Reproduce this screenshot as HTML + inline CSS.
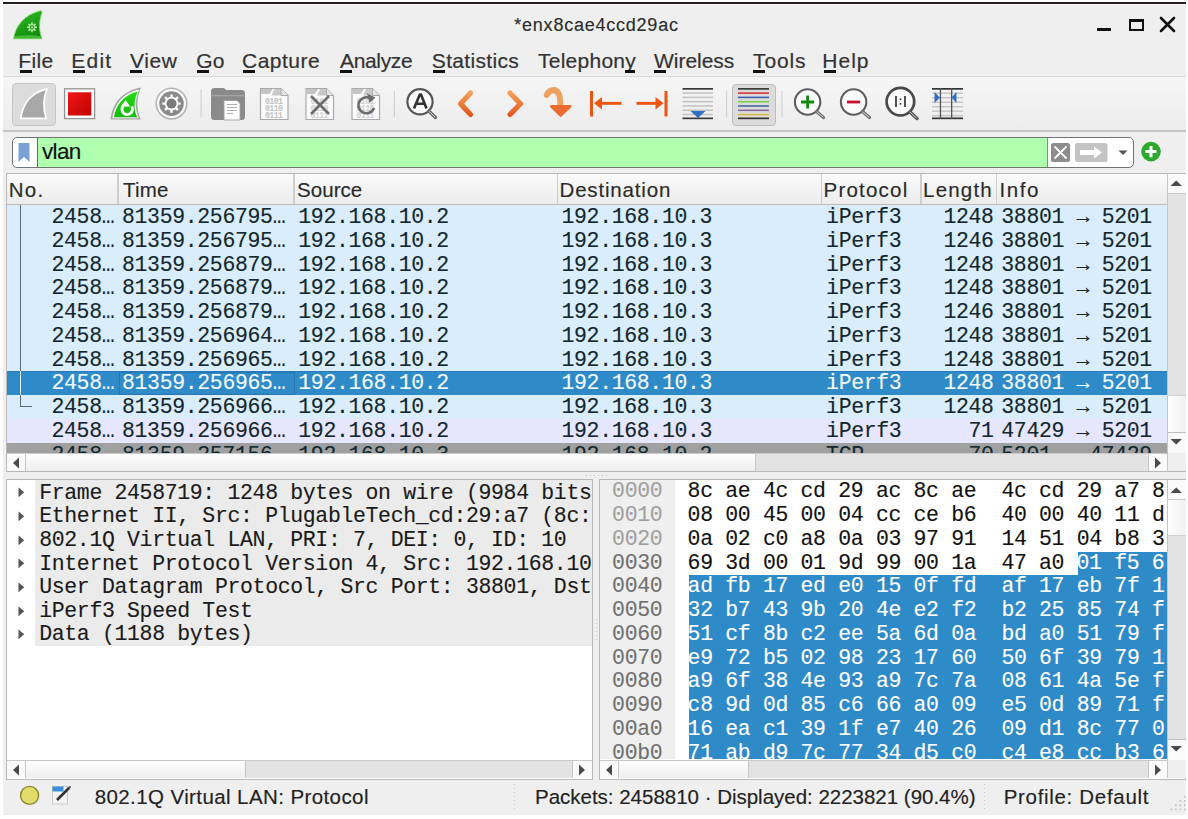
<!DOCTYPE html><html><head><meta charset="utf-8"><style>
*{box-sizing:border-box}
html,body{margin:0;padding:0}
body{width:1188px;height:819px;background:#fff;position:relative;overflow:hidden;font-family:"Liberation Sans",sans-serif;}
.a{position:absolute}
.ui{font-family:"Liberation Sans",sans-serif;color:#333;white-space:pre}
.m{font-family:"Liberation Mono",monospace;font-size:21.5px;letter-spacing:-0.35px;-webkit-text-stroke:0.12px currentColor;white-space:pre;line-height:23.75px}
.menu{font-size:21px;line-height:24px;color:#333;-webkit-text-stroke:0.2px #333}
.menu u{text-decoration:none;border-bottom:3px solid #111;}
</style></head><body>
<div class="a" style="left:3px;top:2px;width:1183px;height:813px;background:#efefef"></div>
<div class="a" style="left:3px;top:2px;width:1183px;height:1.5px;background:#2a1e26"></div>
<div class="a" style="left:3px;top:3.6px;width:1183px;height:1.4px;background:#fafafa"></div>
<svg class="a" style="left:12px;top:9px" width="34" height="32" viewBox="0 0 34 32">
<defs><linearGradient id="gfin" x1="0" y1="0" x2="0.5" y2="1"><stop offset="0" stop-color="#36c024"/><stop offset="1" stop-color="#108c10"/></linearGradient></defs>
<path d="M1.5 29.8 C3.5 17 12 6 28 1.8 Q30.5 1.3 30 3.5 C27 12 26.5 21 30 29.8 Z" fill="url(#gfin)" stroke="#86dc74" stroke-width="0.8"/>
<path d="M2.2 27.3 C12 25.8 22 25.8 29.3 27.3 L30 29.8 L1.6 29.8 Z" fill="#62d24c" opacity="0.6"/>
<path d="M19.27 14.98 L19.19 13.37 L20.81 13.37 L20.73 14.98 L21.83 15.44 L22.92 14.24 L24.06 15.38 L22.86 16.47 L23.32 17.57 L24.93 17.49 L24.93 19.11 L23.32 19.03 L22.86 20.13 L24.06 21.22 L22.92 22.36 L21.83 21.16 L20.73 21.62 L20.81 23.23 L19.19 23.23 L19.27 21.62 L18.17 21.16 L17.08 22.36 L15.94 21.22 L17.14 20.13 L16.68 19.03 L15.07 19.11 L15.07 17.49 L16.68 17.57 L17.14 16.47 L15.94 15.38 L17.08 14.24 L18.17 15.44 Z" fill="#b8ecaa"/>
<circle cx="20" cy="18.3" r="2.2" fill="#2a9a22"/>
<circle cx="20" cy="18.3" r="1.0" fill="#c8f0bc"/>
</svg>
<div class="a ui" style="left:514.3px;top:12.6px;font-size:18px;line-height:24px;letter-spacing:0.767px;-webkit-text-stroke:0.15px #2b2b2b;color:#2b2b2b">*enx8cae4ccd29ac</div>
<div class="a" style="left:1097px;top:28.2px;width:14px;height:3px;background:#111"></div>
<div class="a" style="left:1129px;top:19px;width:15px;height:12px;border:2px solid #111;border-top-width:3px"></div>
<svg class="a" style="left:1159px;top:16px" width="17" height="17" viewBox="0 0 17 17"><path d="M2 2 L15 15 M15 2 L2 15" stroke="#111" stroke-width="2.6" stroke-linecap="round"/></svg>
<div class="a ui menu" style="left:18.2px;top:49px;letter-spacing:0.367px">File</div>
<div class="a ui menu" style="left:71.2px;top:49px;letter-spacing:1.267px">Edit</div>
<div class="a ui menu" style="left:130px;top:49px;letter-spacing:0.6px">View</div>
<div class="a ui menu" style="left:196.3px;top:49px;letter-spacing:0.2px">Go</div>
<div class="a ui menu" style="left:242px;top:49px;letter-spacing:0.5px">Capture</div>
<div class="a ui menu" style="left:340px;top:49px;letter-spacing:-0.333px">Analyze</div>
<div class="a ui menu" style="left:431.8px;top:49px;letter-spacing:0.333px">Statistics</div>
<div class="a ui menu" style="left:538px;top:49px;letter-spacing:0.25px">Telephony</div>
<div class="a ui menu" style="left:654px;top:49px;letter-spacing:-0.029px">Wireless</div>
<div class="a ui menu" style="left:753px;top:49px;letter-spacing:0.9px">Tools</div>
<div class="a ui menu" style="left:822.3px;top:49px;letter-spacing:1.0px">Help</div>
<div class="a" style="left:20.2px;top:70px;width:12px;height:3.2px;background:#111"></div>
<div class="a" style="left:73.2px;top:70px;width:12px;height:3.2px;background:#111"></div>
<div class="a" style="left:130px;top:70px;width:12px;height:3.2px;background:#111"></div>
<div class="a" style="left:197.3px;top:70px;width:12px;height:3.2px;background:#111"></div>
<div class="a" style="left:243px;top:70px;width:12px;height:3.2px;background:#111"></div>
<div class="a" style="left:340px;top:70px;width:12px;height:3.2px;background:#111"></div>
<div class="a" style="left:432.8px;top:70px;width:12px;height:3.2px;background:#111"></div>
<div class="a" style="left:624.5px;top:70px;width:10.5px;height:3.2px;background:#111"></div>
<div class="a" style="left:654px;top:70px;width:12px;height:3.2px;background:#111"></div>
<div class="a" style="left:753px;top:70px;width:12px;height:3.2px;background:#111"></div>
<div class="a" style="left:824.3px;top:70px;width:12px;height:3.2px;background:#111"></div>
<div class="a" style="left:3px;top:76px;width:1183px;height:1px;background:#dadada"></div>
<div class="a" style="left:3px;top:77px;width:1183px;height:53px;background:linear-gradient(#f6f6f6,#ececec)"></div>
<div class="a" style="left:3px;top:130px;width:1183px;height:1.5px;background:#c4c4c4"></div>
<div class="a" style="left:11.5px;top:83px;width:44px;height:43px;border-radius:4px;background:#dcdcdc;border:1px solid #c6c6c6"></div>
<div class="a" style="left:731.5px;top:83.5px;width:44px;height:42px;border-radius:4px;background:#dcdcdc;border:1px solid #bdbdbd"></div>

<svg class="a" style="left:0;top:0" width="1188" height="140" viewBox="0 0 1188 140">
<defs>
<linearGradient id="gred" x1="0" y1="0" x2="1" y2="1"><stop offset="0" stop-color="#f01818"/><stop offset="1" stop-color="#c00000"/></linearGradient>
<linearGradient id="ggrn" x1="0" y1="0" x2="0" y2="1"><stop offset="0" stop-color="#22dd10"/><stop offset="1" stop-color="#18b810"/></linearGradient>
<linearGradient id="gorg" x1="0" y1="0" x2="0" y2="1"><stop offset="0" stop-color="#f2a05a"/><stop offset="1" stop-color="#e35a1e"/></linearGradient>
</defs>
<!-- shark fin gray -->
<path d="M20.8 118.3 C22.5 104 31 92.5 47 88.8 C43.5 97.5 42.8 108 46.2 118.3 Z" fill="#a8a8a8" stroke="#fff" stroke-width="1.7"/>
<!-- stop -->
<rect x="64.6" y="88.8" width="30" height="29.8" fill="#fdfdfd" stroke="#929292" stroke-width="1.3"/>
<rect x="68" y="92.3" width="23.3" height="23.2" fill="url(#gred)"/>
<!-- restart fin -->
<path d="M110.6 119.5 C112.5 104 121 91.5 141 87.6 C136.5 98 136 110 140.8 119.5 Z" fill="#a6a6a6"/>
<path d="M112.4 118.3 C114.5 104.5 122.5 93.3 139.2 89.6 C135 99 134.6 109.5 138.8 118.3 Z" fill="#f4fff0"/>
<path d="M113.9 117.2 C116 105 123.5 94.8 137.8 91.4 C133.8 100 133.4 109.5 137.2 117.2 Z" fill="url(#ggrn)"/>
<path d="M123.2 106 A5.2 5.2 0 1 0 131.6 106.5" fill="none" stroke="#fff" stroke-width="3"/>
<path d="M120.6 106.8 L125.6 100 L130 106.4 Z" fill="#fff"/>
<!-- gear options -->
<circle cx="171.5" cy="103.6" r="15.3" fill="#fafafa" stroke="#b4b4b4" stroke-width="1.6"/>
<circle cx="171.5" cy="103.6" r="12.3" fill="#8a8a8a"/>
<path d="M170.29 96.81 L170.28 94.48 L172.72 94.48 L172.71 96.81 L175.45 97.94 L177.09 96.29 L178.81 98.01 L177.16 99.65 L178.29 102.39 L180.62 102.38 L180.62 104.82 L178.29 104.81 L177.16 107.55 L178.81 109.19 L177.09 110.91 L175.45 109.26 L172.71 110.39 L172.72 112.72 L170.28 112.72 L170.29 110.39 L167.55 109.26 L165.91 110.91 L164.19 109.19 L165.84 107.55 L164.71 104.81 L162.38 104.82 L162.38 102.38 L164.71 102.39 L165.84 99.65 L164.19 98.01 L165.91 96.29 L167.55 97.94 Z" fill="#ffffff"/>
<circle cx="171.5" cy="103.6" r="5" fill="#7c7c7c"/>
<!-- separator -->
<rect x="200.5" y="89" width="1.2" height="28" fill="#d2d2d2"/>
<!-- folder -->
<path d="M211 91.5 Q211 88 214.5 88 L223 88 Q225 88 226 90 L241.5 90 Q245 90 245 93.5 L245 116.5 Q245 120 241.5 120 L214.5 120 Q211 120 211 116.5 Z" fill="#8a8a8a"/>
<rect x="211.5" y="95" width="33" height="1.3" fill="#a5a5a5"/>
<path d="M224 100.5 L237 100.5 L240 103.5 L240 120 L224 120 Z" fill="#fdfdfd" stroke="#a0a0a0" stroke-width="0.9"/>
<path d="M227 104.5 h10 M227 107.5 h10 M227 110.5 h10 M227 113.5 h6" stroke="#b0b0b0" stroke-width="1.1"/>
<path d="M260.5 88.5 L281.0 88.5 L288.0 95.5 L288.0 119.5 L260.5 119.5 Z" fill="#fbfbfb" stroke="#a9a9a9" stroke-width="1.2"/>
<path d="M261.1 89.1 L272.5 89.1 L269.5 94.0 L261.1 94.0 Z" fill="#c4c4c4"/>
<path d="M274.5 89.1 L281.0 89.1 L287.4 95.5 L271.5 95.5 Z" fill="#c9c9c9"/>
<path d="M281.0 88.5 L281.0 95.5 L288.0 95.5" fill="#e6e6e6" stroke="#a9a9a9" stroke-width="1"/>
<text x="265" y="103.5" font-family="Liberation Mono" font-weight="bold" font-size="8.2" fill="#c2c2c2" letter-spacing="-0.6">0101</text><text x="265" y="110.7" font-family="Liberation Mono" font-weight="bold" font-size="8.2" fill="#c2c2c2" letter-spacing="-0.6">0110</text><text x="265" y="117.9" font-family="Liberation Mono" font-weight="bold" font-size="8.2" fill="#c2c2c2" letter-spacing="-0.6">0111</text>
<path d="M306 88.5 L326.5 88.5 L333.5 95.5 L333.5 119.5 L306 119.5 Z" fill="#fbfbfb" stroke="#a9a9a9" stroke-width="1.2"/>
<path d="M306.6 89.1 L318 89.1 L315 94.0 L306.6 94.0 Z" fill="#c4c4c4"/>
<path d="M320 89.1 L326.5 89.1 L332.9 95.5 L317 95.5 Z" fill="#c9c9c9"/>
<path d="M326.5 88.5 L326.5 95.5 L333.5 95.5" fill="#e6e6e6" stroke="#a9a9a9" stroke-width="1"/>
<text x="310.5" y="103.5" font-family="Liberation Mono" font-weight="bold" font-size="8.2" fill="#cfcfcf" letter-spacing="-0.6">0101</text><text x="310.5" y="110.7" font-family="Liberation Mono" font-weight="bold" font-size="8.2" fill="#cfcfcf" letter-spacing="-0.6">0110</text><text x="310.5" y="117.9" font-family="Liberation Mono" font-weight="bold" font-size="8.2" fill="#cfcfcf" letter-spacing="-0.6">0111</text>
<path d="M311 96 L329 114 M329 96 L311 114" stroke="#6c6c6c" stroke-width="2.6"/>
<path d="M352 88.5 L372.5 88.5 L379.5 95.5 L379.5 119.5 L352 119.5 Z" fill="#fbfbfb" stroke="#a9a9a9" stroke-width="1.2"/>
<path d="M352.6 89.1 L364 89.1 L361 94.0 L352.6 94.0 Z" fill="#c4c4c4"/>
<path d="M366 89.1 L372.5 89.1 L378.9 95.5 L363 95.5 Z" fill="#c9c9c9"/>
<path d="M372.5 88.5 L372.5 95.5 L379.5 95.5" fill="#e6e6e6" stroke="#a9a9a9" stroke-width="1"/>
<text x="356.5" y="103.5" font-family="Liberation Mono" font-weight="bold" font-size="8.2" fill="#cfcfcf" letter-spacing="-0.6">0101</text><text x="356.5" y="110.7" font-family="Liberation Mono" font-weight="bold" font-size="8.2" fill="#cfcfcf" letter-spacing="-0.6">0110</text><text x="356.5" y="117.9" font-family="Liberation Mono" font-weight="bold" font-size="8.2" fill="#cfcfcf" letter-spacing="-0.6">0111</text>
<path d="M372.5 100 A8 8 0 1 0 374 108" fill="none" stroke="#6c6c6c" stroke-width="2.6"/>
<path d="M367 93.5 L375.5 97.5 L369.5 103 Z" fill="#6c6c6c"/>
<!-- separator -->
<rect x="393.8" y="91" width="1.2" height="26" fill="#d2d2d2"/>
<!-- find A -->
<circle cx="420" cy="101.8" r="12.6" fill="#fbfbfb" stroke="#555" stroke-width="2.2"/>
<path d="M428.8 111 L435.5 117.5" stroke="#666" stroke-width="3.2" stroke-linecap="round"/>
<path d="M429.5 111.7 L435 117" stroke="#ddd" stroke-width="1" stroke-linecap="round"/>
<path d="M414 108.5 L419.8 94.5 L421 94.5 L426.5 108.5 M416.3 103.8 H424.3" fill="none" stroke="#333" stroke-width="2.6" stroke-linejoin="round"/>
<!-- chevrons -->
<path d="M470.5 93 L460.5 103.7 L470.5 114.5" fill="none" stroke="url(#gorg)" stroke-width="5.2" stroke-linecap="round" stroke-linejoin="round"/>
<path d="M510 93 L520.5 103.7 L510 114.5" fill="none" stroke="url(#gorg)" stroke-width="5.2" stroke-linecap="round" stroke-linejoin="round"/>
<!-- jump arrow -->
<path d="M546.8 95 C549 89.5 556 88 558.8 94 C560 97 560.3 101 560.6 106" fill="none" stroke="#eda260" stroke-width="6" stroke-linecap="round"/>
<path d="M551.2 106.3 L570.2 106.3 L560.7 115.6 Z" fill="#e96d2e" stroke="#e96d2e" stroke-width="2.6" stroke-linejoin="round"/>
<!-- first/last -->
<rect x="590" y="91" width="3" height="25.5" fill="#ee5412"/>
<path d="M594 103.3 L602 97 L602 109.6 Z" fill="#ee5412"/>
<rect x="600" y="101.9" width="21.5" height="2.9" fill="#ee5412"/>
<rect x="664.5" y="91" width="3" height="25.5" fill="#ee5412"/>
<path d="M663.5 103.3 L655.5 97 L655.5 109.6 Z" fill="#ee5412"/>
<rect x="636.5" y="101.9" width="21.5" height="2.9" fill="#ee5412"/>
<!-- autoscroll lines -->
<g>
<rect x="682.5" y="88" width="30.5" height="1.7" fill="#3a3a3a"/>
<rect x="682.5" y="92.3" width="30.5" height="1.5" fill="#c2c2c2"/>
<rect x="682.5" y="96.6" width="30.5" height="1.5" fill="#c2c2c2"/>
<rect x="682.5" y="100.9" width="30.5" height="1.5" fill="#c2c2c2"/>
<rect x="682.5" y="105.2" width="30.5" height="1.5" fill="#c2c2c2"/>
<rect x="682.5" y="109.5" width="30.5" height="1.5" fill="#c2c2c2"/>
<rect x="682.5" y="113.8" width="30.5" height="1.5" fill="#c2c2c2"/>
<rect x="682.5" y="117.5" width="30.5" height="1.7" fill="#3a3a3a"/>
<path d="M698 118 L690.5 111 L705.5 111 Z" fill="#2f6fc0"/>
</g>
<rect x="726" y="91" width="1.2" height="26" fill="#d2d2d2"/>
<!-- colorize lines -->
<g>
<rect x="738" y="88" width="31" height="1.7" fill="#3a3a3a"/>
<rect x="738" y="92.3" width="31" height="1.6" fill="#d8383b"/>
<rect x="738" y="96.6" width="31" height="1.6" fill="#3c62b0"/>
<rect x="738" y="100.9" width="31" height="1.6" fill="#7ccc4a"/>
<rect x="738" y="105.2" width="31" height="1.6" fill="#4a6aa8"/>
<rect x="738" y="109.5" width="31" height="1.6" fill="#8a6a9a"/>
<rect x="738" y="113.8" width="31" height="1.6" fill="#d9b84a"/>
<rect x="738" y="117.5" width="31" height="1.7" fill="#333"/>
</g>
<rect x="781.3" y="91" width="1.2" height="26" fill="#d2d2d2"/>
<!-- zoom in -->
<circle cx="807.6" cy="102" r="12.7" fill="#fbfbfb" stroke="#5e5e5e" stroke-width="2.1"/>
<path d="M816.5 111.5 L823.5 117.5" stroke="#6e6e6e" stroke-width="3.2" stroke-linecap="round"/>
<path d="M817 112 L823 117" stroke="#d6d6d6" stroke-width="1" stroke-linecap="round"/>
<path d="M801 102 h13.2 M807.6 95.4 v13.2" stroke="#128a12" stroke-width="2.8"/>
<!-- zoom out -->
<circle cx="853.6" cy="102" r="12.7" fill="#fbfbfb" stroke="#5e5e5e" stroke-width="2.1"/>
<path d="M862.5 111.5 L869.5 117.5" stroke="#6e6e6e" stroke-width="3.2" stroke-linecap="round"/>
<path d="M863 112 L869 117" stroke="#d6d6d6" stroke-width="1" stroke-linecap="round"/>
<path d="M847 102 h13.2" stroke="#c8102e" stroke-width="2.8"/>
<!-- zoom 100 -->
<circle cx="900.4" cy="101.6" r="13.8" fill="#fbfbfb" stroke="#4a4a4a" stroke-width="2.7"/>
<path d="M910 112 L917 118.5" stroke="#555" stroke-width="3.4" stroke-linecap="round"/>
<path d="M910.5 112.5 L916.5 118" stroke="#ccc" stroke-width="1" stroke-linecap="round"/>
<path d="M896 96 v11 M905 96 v11" stroke="#333" stroke-width="1.7"/>
<rect x="899.7" y="98.5" width="1.6" height="1.6" fill="#333"/><rect x="899.7" y="103" width="1.6" height="1.6" fill="#333"/>
<!-- resize columns -->
<g>
<rect x="932" y="88" width="31" height="1.7" fill="#333"/>
<rect x="932" y="117.5" width="31" height="1.7" fill="#333"/>
<rect x="932" y="92.5" width="31" height="1.4" fill="#c5c5c5"/>
<rect x="932" y="97" width="31" height="1.4" fill="#c5c5c5"/>
<rect x="932" y="101.5" width="31" height="1.4" fill="#c5c5c5"/>
<rect x="932" y="106" width="31" height="1.4" fill="#c5c5c5"/>
<rect x="932" y="110.5" width="31" height="1.4" fill="#c5c5c5"/>
<rect x="932" y="115" width="31" height="1.4" fill="#c5c5c5"/>
<rect x="939.8" y="88" width="1.3" height="31" fill="#555"/>
<rect x="951" y="88" width="1.3" height="31" fill="#555"/>
<path d="M934.5 92 L940 97.5 L934.5 103 Z" fill="#2f6fc0"/>
<path d="M956.5 92 L951.5 97.5 L956.5 103 Z" fill="#2f6fc0"/>
</g>
</svg>

<div class="a" style="left:11.5px;top:137.3px;width:1122.5px;height:30.3px;border:1.4px solid #6f756f;border-radius:5px;background:#fff;overflow:hidden"><div class="a" style="left:24.5px;top:0;width:1011px;height:100%;background:#afffaf;border-left:1.3px solid #6a6a6a;border-right:1px solid #8a8a8a"></div></div>
<svg class="a" style="left:17px;top:142px" width="14" height="21" viewBox="0 0 14 21"><path d="M1.5 1 H12.5 V20 L7 15 L1.5 20 Z" fill="#7aa0d6"/></svg>
<div class="a ui" style="left:41.9px;top:139px;font-size:22.5px;line-height:26px;letter-spacing:-0.6px;color:#111;-webkit-text-stroke:0.15px #111">vlan</div>
<svg class="a" style="left:1049px;top:141px" width="82" height="24" viewBox="0 0 82 24">
<rect x="2" y="2" width="19" height="19" rx="2.5" fill="#8c8c8c"/>
<path d="M5.5 5.5 L17.5 17.5 M17.5 5.5 L5.5 17.5" stroke="#fff" stroke-width="1.8"/>
<rect x="26" y="2" width="32.5" height="19" rx="2.5" fill="#c3c3c3"/>
<path d="M31 9 H45 V5.5 L53 11.5 L45 17.5 V14 H31 Z" fill="#fff"/>
<path d="M69.5 9.5 L78.5 9.5 L74 14 Z" fill="#555"/>
</svg>
<svg class="a" style="left:1140px;top:141px" width="22" height="22" viewBox="0 0 22 22"><circle cx="11" cy="10.6" r="9.8" fill="#2ca82c"/><path d="M11 5 V16.2 M5.4 10.6 H16.6" stroke="#fff" stroke-width="3"/></svg>
<div class="a" style="left:6px;top:172.6px;width:1180px;height:299.7px;background:#fff;border:1px solid #b9b9b9;border-top:1.6px solid #b8b8b8"></div>
<div class="a" style="left:7px;top:173.8px;width:1160px;height:31.3px;background:linear-gradient(#fbfbfb,#ececec);border-bottom:1.5px solid #bcbcbc"></div>
<div class="a" style="left:117.4px;top:174px;width:1.3px;height:30px;background:#cfcfcf"></div>
<div class="a" style="left:293.4px;top:174px;width:1.3px;height:30px;background:#cfcfcf"></div>
<div class="a" style="left:556.6999999999999px;top:174px;width:1.3px;height:30px;background:#cfcfcf"></div>
<div class="a" style="left:820.8px;top:174px;width:1.3px;height:30px;background:#cfcfcf"></div>
<div class="a" style="left:920.4px;top:174px;width:1.3px;height:30px;background:#cfcfcf"></div>
<div class="a" style="left:995.6999999999999px;top:174px;width:1.3px;height:30px;background:#cfcfcf"></div>
<div class="a ui" style="left:8.8px;top:178.3px;font-size:20.5px;line-height:24px;letter-spacing:1.2px;color:#2a2a2a;-webkit-text-stroke:0.15px #2a2a2a">No.</div>
<div class="a ui" style="left:122.9px;top:178.3px;font-size:20.5px;line-height:24px;letter-spacing:0.267px;color:#2a2a2a;-webkit-text-stroke:0.15px #2a2a2a">Time</div>
<div class="a ui" style="left:297px;top:178.3px;font-size:20.5px;line-height:24px;letter-spacing:0.06px;color:#2a2a2a;-webkit-text-stroke:0.15px #2a2a2a">Source</div>
<div class="a ui" style="left:559.5px;top:178.3px;font-size:20.5px;line-height:24px;letter-spacing:0.83px;color:#2a2a2a;-webkit-text-stroke:0.15px #2a2a2a">Destination</div>
<div class="a ui" style="left:823.5px;top:178.3px;font-size:20.5px;line-height:24px;letter-spacing:1.214px;color:#2a2a2a;-webkit-text-stroke:0.15px #2a2a2a">Protocol</div>
<div class="a ui" style="left:923.1px;top:178.3px;font-size:20.5px;line-height:24px;letter-spacing:1.18px;color:#2a2a2a;-webkit-text-stroke:0.15px #2a2a2a">Length</div>
<div class="a ui" style="left:999.6px;top:178.3px;font-size:20.5px;line-height:24px;letter-spacing:1.533px;color:#2a2a2a;-webkit-text-stroke:0.15px #2a2a2a">Info</div>
<div class="a" style="left:7px;top:205px;width:1160px;height:247.5px;overflow:hidden">
<div class="a" style="left:0;top:0.00px;width:1160px;height:23.75px;background:#daedfd;color:#12272e">
<div class="a m" style="left:44.50px;top:1.1px">2458…</div>
<div class="a m" style="left:115.00px;top:1.1px">81359.256795…</div>
<div class="a m" style="left:291.30px;top:1.1px">192.168.10.2</div>
<div class="a m" style="left:554.50px;top:1.1px">192.168.10.3</div>
<div class="a m" style="left:819.10px;top:1.1px">iPerf3</div>
<div class="a m" style="right:173.40px;top:1.1px">1248</div>
<div class="a m" style="left:994.30px;top:1.1px">38801 → 5201</div>
</div>
<div class="a" style="left:0;top:23.75px;width:1160px;height:23.75px;background:#daedfd;color:#12272e">
<div class="a m" style="left:44.50px;top:1.1px">2458…</div>
<div class="a m" style="left:115.00px;top:1.1px">81359.256795…</div>
<div class="a m" style="left:291.30px;top:1.1px">192.168.10.2</div>
<div class="a m" style="left:554.50px;top:1.1px">192.168.10.3</div>
<div class="a m" style="left:819.10px;top:1.1px">iPerf3</div>
<div class="a m" style="right:173.40px;top:1.1px">1246</div>
<div class="a m" style="left:994.30px;top:1.1px">38801 → 5201</div>
</div>
<div class="a" style="left:0;top:47.50px;width:1160px;height:23.75px;background:#daedfd;color:#12272e">
<div class="a m" style="left:44.50px;top:1.1px">2458…</div>
<div class="a m" style="left:115.00px;top:1.1px">81359.256879…</div>
<div class="a m" style="left:291.30px;top:1.1px">192.168.10.2</div>
<div class="a m" style="left:554.50px;top:1.1px">192.168.10.3</div>
<div class="a m" style="left:819.10px;top:1.1px">iPerf3</div>
<div class="a m" style="right:173.40px;top:1.1px">1248</div>
<div class="a m" style="left:994.30px;top:1.1px">38801 → 5201</div>
</div>
<div class="a" style="left:0;top:71.25px;width:1160px;height:23.75px;background:#daedfd;color:#12272e">
<div class="a m" style="left:44.50px;top:1.1px">2458…</div>
<div class="a m" style="left:115.00px;top:1.1px">81359.256879…</div>
<div class="a m" style="left:291.30px;top:1.1px">192.168.10.2</div>
<div class="a m" style="left:554.50px;top:1.1px">192.168.10.3</div>
<div class="a m" style="left:819.10px;top:1.1px">iPerf3</div>
<div class="a m" style="right:173.40px;top:1.1px">1248</div>
<div class="a m" style="left:994.30px;top:1.1px">38801 → 5201</div>
</div>
<div class="a" style="left:0;top:95.00px;width:1160px;height:23.75px;background:#daedfd;color:#12272e">
<div class="a m" style="left:44.50px;top:1.1px">2458…</div>
<div class="a m" style="left:115.00px;top:1.1px">81359.256879…</div>
<div class="a m" style="left:291.30px;top:1.1px">192.168.10.2</div>
<div class="a m" style="left:554.50px;top:1.1px">192.168.10.3</div>
<div class="a m" style="left:819.10px;top:1.1px">iPerf3</div>
<div class="a m" style="right:173.40px;top:1.1px">1246</div>
<div class="a m" style="left:994.30px;top:1.1px">38801 → 5201</div>
</div>
<div class="a" style="left:0;top:118.75px;width:1160px;height:23.75px;background:#daedfd;color:#12272e">
<div class="a m" style="left:44.50px;top:1.1px">2458…</div>
<div class="a m" style="left:115.00px;top:1.1px">81359.256964…</div>
<div class="a m" style="left:291.30px;top:1.1px">192.168.10.2</div>
<div class="a m" style="left:554.50px;top:1.1px">192.168.10.3</div>
<div class="a m" style="left:819.10px;top:1.1px">iPerf3</div>
<div class="a m" style="right:173.40px;top:1.1px">1248</div>
<div class="a m" style="left:994.30px;top:1.1px">38801 → 5201</div>
</div>
<div class="a" style="left:0;top:142.50px;width:1160px;height:23.75px;background:#daedfd;color:#12272e">
<div class="a m" style="left:44.50px;top:1.1px">2458…</div>
<div class="a m" style="left:115.00px;top:1.1px">81359.256965…</div>
<div class="a m" style="left:291.30px;top:1.1px">192.168.10.2</div>
<div class="a m" style="left:554.50px;top:1.1px">192.168.10.3</div>
<div class="a m" style="left:819.10px;top:1.1px">iPerf3</div>
<div class="a m" style="right:173.40px;top:1.1px">1248</div>
<div class="a m" style="left:994.30px;top:1.1px">38801 → 5201</div>
</div>
<div class="a" style="left:0;top:166.25px;width:1160px;height:23.75px;background:#2f8ac8;color:#f2f9ff">
<div class="a" style="left:0;top:0;width:1160px;height:1px;background:#2a7bbd"></div>
<div class="a" style="left:111.5px;top:0.5px;width:176px;height:22.8px;border:1px solid rgba(20,60,110,0.28)"></div>
<div class="a m" style="left:44.50px;top:1.1px">2458…</div>
<div class="a m" style="left:115.00px;top:1.1px">81359.256965…</div>
<div class="a m" style="left:291.30px;top:1.1px">192.168.10.2</div>
<div class="a m" style="left:554.50px;top:1.1px">192.168.10.3</div>
<div class="a m" style="left:819.10px;top:1.1px">iPerf3</div>
<div class="a m" style="right:173.40px;top:1.1px">1248</div>
<div class="a m" style="left:994.30px;top:1.1px">38801 → 5201</div>
</div>
<div class="a" style="left:0;top:190.00px;width:1160px;height:23.75px;background:#daedfd;color:#12272e">
<div class="a m" style="left:44.50px;top:1.1px">2458…</div>
<div class="a m" style="left:115.00px;top:1.1px">81359.256966…</div>
<div class="a m" style="left:291.30px;top:1.1px">192.168.10.2</div>
<div class="a m" style="left:554.50px;top:1.1px">192.168.10.3</div>
<div class="a m" style="left:819.10px;top:1.1px">iPerf3</div>
<div class="a m" style="right:173.40px;top:1.1px">1248</div>
<div class="a m" style="left:994.30px;top:1.1px">38801 → 5201</div>
</div>
<div class="a" style="left:0;top:213.75px;width:1160px;height:23.75px;background:#e7e6ff;color:#12272e">
<div class="a m" style="left:44.50px;top:1.1px">2458…</div>
<div class="a m" style="left:115.00px;top:1.1px">81359.256966…</div>
<div class="a m" style="left:291.30px;top:1.1px">192.168.10.2</div>
<div class="a m" style="left:554.50px;top:1.1px">192.168.10.3</div>
<div class="a m" style="left:819.10px;top:1.1px">iPerf3</div>
<div class="a m" style="right:173.40px;top:1.1px">71</div>
<div class="a m" style="left:994.30px;top:1.1px">47429 → 5201</div>
</div>
<div class="a" style="left:0;top:237.50px;width:1160px;height:23.75px;background:#a0a0a0;color:#12272e">
<div class="a m" style="left:44.50px;top:1.1px">2458…</div>
<div class="a m" style="left:115.00px;top:1.1px">81359.257156…</div>
<div class="a m" style="left:291.30px;top:1.1px">192.168.10.3</div>
<div class="a m" style="left:554.50px;top:1.1px">192.168.10.2</div>
<div class="a m" style="left:819.10px;top:1.1px">TCP</div>
<div class="a m" style="right:173.40px;top:1.1px">70</div>
<div class="a m" style="left:994.30px;top:1.1px">5201 → 47429</div>
</div>
<div class="a" style="left:12.6px;top:0;width:1.2px;height:202.00px;background:#5a6a78"></div>
<div class="a" style="left:12.6px;top:201.00px;width:12px;height:1.2px;background:#5a6a78"></div>
<div class="a" style="left:12.6px;top:166.25px;width:1.4px;height:23.75px;background:#e6f2fb"></div>
</div>
<div class="a" style="left:1167px;top:173.8px;width:18.8px;height:278.5px;background:#e3e3e3;border-left:1px solid #c6c6c6"></div>
<div class="a" style="left:1167px;top:173.8px;width:18.8px;height:20px;background:#fafafa;border-left:1px solid #c6c6c6;border-bottom:1px solid #c9c9c9"></div>
<svg class="a" style="left:1170px;top:179px" width="13" height="8"><path d="M0.5 7 L6.2 1.5 L12 7 Z" fill="#4a4a4a"/></svg>
<div class="a" style="left:1167px;top:394.5px;width:18.8px;height:37.5px;background:linear-gradient(90deg,#fdfdfd,#f1f1f1);border-left:1px solid #c6c6c6;border-top:1px solid #cfcfcf"></div>
<div class="a" style="left:1167px;top:432px;width:18.8px;height:20.5px;background:#fafafa;border-left:1px solid #c6c6c6;border-top:1.5px solid #bdbdbd"></div>
<svg class="a" style="left:1170px;top:438px" width="13" height="8"><path d="M0.5 1 L6.2 6.5 L12 1 Z" fill="#4a4a4a"/></svg>
<div class="a" style="left:7px;top:452.5px;width:1160px;height:18.8px;background:#e3e3e3;border-top:1px solid #c9c9c9"></div>
<div class="a" style="left:7px;top:452.5px;width:19px;height:18.8px;background:#fafafa;border-right:1px solid #c6c6c6;border-top:1px solid #c9c9c9"></div>
<svg class="a" style="left:12px;top:457px" width="8" height="12"><path d="M7 0.5 L1 6 L7 11.5 Z" fill="#4a4a4a"/></svg>
<div class="a" style="left:26px;top:452.5px;width:729.5px;height:18.8px;background:linear-gradient(#fdfdfd,#efefef);border-right:1px solid #c6c6c6;border-top:1px solid #c9c9c9"></div>
<div class="a" style="left:1148px;top:452.5px;width:19px;height:18.8px;background:#fafafa;border-left:1px solid #c6c6c6;border-top:1px solid #c9c9c9"></div>
<svg class="a" style="left:1154px;top:457px" width="8" height="12"><path d="M1 0.5 L7 6 L1 11.5 Z" fill="#4a4a4a"/></svg>
<div class="a" style="left:1167px;top:452.5px;width:18.8px;height:18.8px;background:#efefef;border-left:1px solid #c6c6c6"></div>
<div class="a" style="left:586px;top:474.5px;width:24px;height:1.5px;background:repeating-linear-gradient(90deg,#bbb 0 1.5px,transparent 1.5px 4px)"></div>
<div class="a" style="left:6px;top:479.3px;width:587px;height:300.5px;background:#fff;border:1px solid #b9b9b9"></div>
<div class="a" style="left:35.2px;top:480.3px;width:557px;height:165.5px;background:#ebebeb"></div>
<div class="a" style="left:7px;top:480.3px;width:585px;height:279px;overflow:hidden">
<svg class="a" style="left:11px;top:7.20px" width="7" height="11"><path d="M0.5 0.5 L6.2 5.3 L0.5 10.2 Z" fill="#555"/></svg>
<div class="a m" style="left:32.20px;top:1.30px;color:#1a1a1a">Frame 2458719: 1248 bytes on wire (9984 bits), 1248 bytes captured</div>
<svg class="a" style="left:11px;top:30.84px" width="7" height="11"><path d="M0.5 0.5 L6.2 5.3 L0.5 10.2 Z" fill="#555"/></svg>
<div class="a m" style="left:32.20px;top:24.94px;color:#1a1a1a">Ethernet II, Src: PlugableTech_cd:29:a7 (8c:ae:4c:cd:29:a7)</div>
<svg class="a" style="left:11px;top:54.48px" width="7" height="11"><path d="M0.5 0.5 L6.2 5.3 L0.5 10.2 Z" fill="#555"/></svg>
<div class="a m" style="left:32.20px;top:48.58px;color:#1a1a1a">802.1Q Virtual LAN, PRI: 7, DEI: 0, ID: 10</div>
<svg class="a" style="left:11px;top:78.12px" width="7" height="11"><path d="M0.5 0.5 L6.2 5.3 L0.5 10.2 Z" fill="#555"/></svg>
<div class="a m" style="left:32.20px;top:72.22px;color:#1a1a1a">Internet Protocol Version 4, Src: 192.168.10.2, Dst: 192.168.10.3</div>
<svg class="a" style="left:11px;top:101.76px" width="7" height="11"><path d="M0.5 0.5 L6.2 5.3 L0.5 10.2 Z" fill="#555"/></svg>
<div class="a m" style="left:32.20px;top:95.86px;color:#1a1a1a">User Datagram Protocol, Src Port: 38801, Dst Port: 5201</div>
<svg class="a" style="left:11px;top:125.40px" width="7" height="11"><path d="M0.5 0.5 L6.2 5.3 L0.5 10.2 Z" fill="#555"/></svg>
<div class="a m" style="left:32.20px;top:119.50px;color:#1a1a1a">iPerf3 Speed Test</div>
<svg class="a" style="left:11px;top:149.04px" width="7" height="11"><path d="M0.5 0.5 L6.2 5.3 L0.5 10.2 Z" fill="#555"/></svg>
<div class="a m" style="left:32.20px;top:143.14px;color:#1a1a1a">Data (1188 bytes)</div>
</div>
<div class="a" style="left:7px;top:759.5px;width:585px;height:18.8px;background:#e3e3e3;border-top:1px solid #c9c9c9"></div>
<div class="a" style="left:7px;top:759.5px;width:19px;height:18.8px;background:#fafafa;border-right:1px solid #c6c6c6;border-top:1px solid #c9c9c9"></div>
<svg class="a" style="left:12px;top:764px" width="8" height="12"><path d="M7 0.5 L1 6 L7 11.5 Z" fill="#4a4a4a"/></svg>
<div class="a" style="left:26px;top:759.5px;width:220px;height:18.8px;background:linear-gradient(#fdfdfd,#efefef);border-right:1px solid #c6c6c6;border-top:1px solid #c9c9c9"></div>
<div class="a" style="left:572px;top:759.5px;width:20px;height:18.8px;background:#fafafa;border-left:1px solid #c6c6c6;border-top:1px solid #c9c9c9"></div>
<svg class="a" style="left:578px;top:764px" width="8" height="12"><path d="M1 0.5 L7 6 L1 11.5 Z" fill="#4a4a4a"/></svg>
<div class="a" style="left:595.6px;top:619px;width:1.5px;height:23px;background:repeating-linear-gradient(#c4c4c4 0 1.5px,transparent 1.5px 4px)"></div>
<div class="a" style="left:599px;top:479.3px;width:587px;height:300.5px;background:#fff;border:1px solid #b9b9b9"></div>
<div class="a" style="left:600px;top:480.3px;width:75px;height:279px;background:#efefef"></div>
<div class="a" style="left:600px;top:480.3px;width:567px;height:279px;overflow:hidden">
<div class="a m" style="left:12.10px;top:0.10px;color:#a0a0a0">0000</div>
<div class="a m" style="left:87.60px;top:0.10px;color:#111">8c ae 4c cd 29 ac 8c ae  4c cd 29 a7 8</div>
<div class="a m" style="left:12.10px;top:23.85px;color:#a0a0a0">0010</div>
<div class="a m" style="left:87.60px;top:23.85px;color:#111">08 00 45 00 04 cc ce b6  40 00 40 11 d</div>
<div class="a m" style="left:12.10px;top:47.60px;color:#a0a0a0">0020</div>
<div class="a m" style="left:87.60px;top:47.60px;color:#111">0a 02 c0 a8 0a 03 97 91  14 51 04 b8 3</div>
<div class="a m" style="left:12.10px;top:71.35px;color:#707070">0030</div>
<div class="a m" style="left:87.60px;top:71.35px;color:#111">69 3d 00 01 9d 99 00 1a  47 a0 </div>
<div class="a" style="left:477.76px;top:71.25px;width:600px;height:23.75px;background:#2f8ac8"></div>
<div class="a m" style="left:476.56px;top:71.35px;color:#fff">01 f5 6</div>
<div class="a m" style="left:12.10px;top:95.10px;color:#707070">0040</div>
<div class="a" style="left:88.80px;top:95.00px;width:600px;height:24.05px;background:#2f8ac8"></div>
<div class="a m" style="left:87.60px;top:95.10px;color:#fff">ad fb 17 ed e0 15 0f fd  af 17 eb 7f 1</div>
<div class="a m" style="left:12.10px;top:118.85px;color:#707070">0050</div>
<div class="a" style="left:88.80px;top:118.75px;width:600px;height:24.05px;background:#2f8ac8"></div>
<div class="a m" style="left:87.60px;top:118.85px;color:#fff">32 b7 43 9b 20 4e e2 f2  b2 25 85 74 f</div>
<div class="a m" style="left:12.10px;top:142.60px;color:#707070">0060</div>
<div class="a" style="left:88.80px;top:142.50px;width:600px;height:24.05px;background:#2f8ac8"></div>
<div class="a m" style="left:87.60px;top:142.60px;color:#fff">51 cf 8b c2 ee 5a 6d 0a  bd a0 51 79 f</div>
<div class="a m" style="left:12.10px;top:166.35px;color:#707070">0070</div>
<div class="a" style="left:88.80px;top:166.25px;width:600px;height:24.05px;background:#2f8ac8"></div>
<div class="a m" style="left:87.60px;top:166.35px;color:#fff">e9 72 b5 02 98 23 17 60  50 6f 39 79 1</div>
<div class="a m" style="left:12.10px;top:190.10px;color:#707070">0080</div>
<div class="a" style="left:88.80px;top:190.00px;width:600px;height:24.05px;background:#2f8ac8"></div>
<div class="a m" style="left:87.60px;top:190.10px;color:#fff">a9 6f 38 4e 93 a9 7c 7a  08 61 4a 5e f</div>
<div class="a m" style="left:12.10px;top:213.85px;color:#707070">0090</div>
<div class="a" style="left:88.80px;top:213.75px;width:600px;height:24.05px;background:#2f8ac8"></div>
<div class="a m" style="left:87.60px;top:213.85px;color:#fff">c8 9d 0d 85 c6 66 a0 09  e5 0d 89 71 f</div>
<div class="a m" style="left:12.10px;top:237.60px;color:#707070">00a0</div>
<div class="a" style="left:88.80px;top:237.50px;width:600px;height:24.05px;background:#2f8ac8"></div>
<div class="a m" style="left:87.60px;top:237.60px;color:#fff">16 ea c1 39 1f e7 40 26  09 d1 8c 77 0</div>
<div class="a m" style="left:12.10px;top:261.35px;color:#707070">00b0</div>
<div class="a" style="left:88.80px;top:261.25px;width:600px;height:24.05px;background:#2f8ac8"></div>
<div class="a m" style="left:87.60px;top:261.35px;color:#fff">71 ab d9 7c 77 34 d5 c0  c4 e8 cc b3 6</div>
</div>
<div class="a" style="left:1167px;top:480.3px;width:18.8px;height:279px;background:#e3e3e3;border-left:1px solid #c6c6c6"></div>
<div class="a" style="left:1167px;top:480.3px;width:18.8px;height:20px;background:#fafafa;border-left:1px solid #c6c6c6;border-bottom:1px solid #c9c9c9"></div>
<svg class="a" style="left:1170px;top:485.5px" width="13" height="8"><path d="M0.5 7 L6.2 1.5 L12 7 Z" fill="#4a4a4a"/></svg>
<div class="a" style="left:1167px;top:500.3px;width:18.8px;height:36px;background:linear-gradient(90deg,#fdfdfd,#f1f1f1);border-left:1px solid #c6c6c6;border-bottom:1px solid #cfcfcf"></div>
<div class="a" style="left:1167px;top:739px;width:18.8px;height:20.5px;background:#fafafa;border-left:1px solid #c6c6c6;border-top:1.5px solid #bdbdbd"></div>
<svg class="a" style="left:1170px;top:745px" width="13" height="8"><path d="M0.5 1 L6.2 6.5 L12 1 Z" fill="#4a4a4a"/></svg>
<div class="a" style="left:600px;top:759.5px;width:567px;height:18.8px;background:#e3e3e3;border-top:1px solid #c9c9c9"></div>
<div class="a" style="left:600px;top:759.5px;width:19px;height:18.8px;background:#fafafa;border-right:1px solid #c6c6c6;border-top:1px solid #c9c9c9"></div>
<svg class="a" style="left:605px;top:764px" width="8" height="12"><path d="M7 0.5 L1 6 L7 11.5 Z" fill="#4a4a4a"/></svg>
<div class="a" style="left:619px;top:759.5px;width:130px;height:18.8px;background:linear-gradient(#fdfdfd,#efefef);border-right:1px solid #c6c6c6;border-top:1px solid #c9c9c9"></div>
<div class="a" style="left:1148px;top:759.5px;width:19px;height:18.8px;background:#fafafa;border-left:1px solid #c6c6c6;border-top:1px solid #c9c9c9"></div>
<svg class="a" style="left:1154px;top:764px" width="8" height="12"><path d="M1 0.5 L7 6 L1 11.5 Z" fill="#4a4a4a"/></svg>
<div class="a" style="left:1167px;top:759.5px;width:18.8px;height:18.8px;background:#efefef;border-left:1px solid #c6c6c6"></div>
<svg class="a" style="left:19px;top:785px" width="22" height="22"><circle cx="10.6" cy="10.4" r="9" fill="#e3dc6a" stroke="#8a8630" stroke-width="1.4"/></svg>
<svg class="a" style="left:52px;top:785px" width="21" height="21" viewBox="0 0 21 21">
<rect x="0.5" y="1.5" width="15" height="17.5" fill="#f4f4f4" stroke="#c8c8c8" stroke-width="1"/>
<rect x="0.5" y="1.5" width="11" height="5" fill="#3a8fd8"/>
<path d="M5 15 L17 3" stroke="#333" stroke-width="2.6"/>
<path d="M16 2 L19 1 L18 4 Z" fill="#333"/>
</svg>
<div class="a ui" style="left:94.7px;top:784.7px;font-size:20.5px;line-height:24px;letter-spacing:0.404px;color:#222;-webkit-text-stroke:0.15px #222">802.1Q Virtual LAN: Protocol</div>
<div class="a" style="left:514px;top:784px;width:1.3px;height:28px;background:repeating-linear-gradient(#c6c6c6 0 1.5px,transparent 1.5px 4px)"></div>
<div class="a ui" style="left:535px;top:784.7px;font-size:20.5px;line-height:24px;letter-spacing:-0.011px;color:#222;-webkit-text-stroke:0.15px #222">Packets: 2458810 · Displayed: 2223821 (90.4%)</div>
<div class="a" style="left:984px;top:784px;width:1.3px;height:28px;background:repeating-linear-gradient(#c6c6c6 0 1.5px,transparent 1.5px 4px)"></div>
<div class="a ui" style="left:1003.7px;top:784.7px;font-size:20.5px;line-height:24px;letter-spacing:0.687px;color:#222;-webkit-text-stroke:0.15px #222">Profile: Default</div>
<svg class="a" style="left:1170px;top:794px" width="17" height="20"><rect x="14.0" y="2.0" width="1.6" height="1.6" fill="#bdbdbd"/><rect x="14.0" y="6.2" width="1.6" height="1.6" fill="#bdbdbd"/><rect x="9.5" y="6.2" width="1.6" height="1.6" fill="#bdbdbd"/><rect x="14.0" y="10.4" width="1.6" height="1.6" fill="#bdbdbd"/><rect x="9.5" y="10.4" width="1.6" height="1.6" fill="#bdbdbd"/><rect x="5.0" y="10.4" width="1.6" height="1.6" fill="#bdbdbd"/><rect x="14.0" y="14.6" width="1.6" height="1.6" fill="#bdbdbd"/><rect x="9.5" y="14.6" width="1.6" height="1.6" fill="#bdbdbd"/><rect x="5.0" y="14.6" width="1.6" height="1.6" fill="#bdbdbd"/><rect x="0.5" y="14.6" width="1.6" height="1.6" fill="#bdbdbd"/></svg>
</body></html>
